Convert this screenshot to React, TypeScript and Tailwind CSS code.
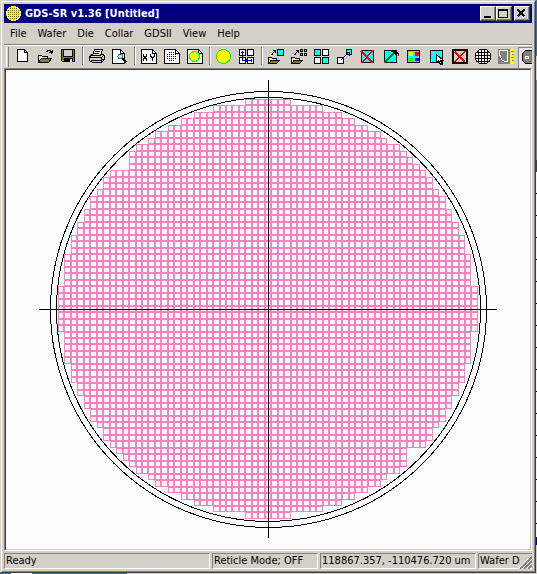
import type { ReactNode } from "react";

const COLS = 65;
const PITCH = 6.46;

// first die column for each row of the upper half, the lower half mirrors it
const ROW_START = [
  29, 24, 21, 19, 17, 15, 14, 12, 11, 10, 9, 8, 7, 7, 6, 5, 5, 4, 4, 3, 3, 2, 2, 2, 1, 1, 1, 1, 1, 0, 0, 0, 0,
];

const edge = (origin: number, i: number) => Math.round(origin + i * PITCH);

const diePath = () => {
  let d = "";
  for (let row = 0; row < COLS; row++) {
    const base = ROW_START[Math.min(row, COLS - 1 - row)];
    let first = base;
    let last = COLS - 1 - base;
    // dies kept free for the wafer marks
    if (row >= 8 && row <= 10) first = 11;
    if (row >= 54 && row <= 56) last = 53;
    const y = edge(99, row);
    const h = edge(99, row + 1) - y;
    for (let col = first; col <= last; col++) {
      const x = edge(58, col);
      const w = edge(58, col + 1) - x;
      d += `M${x} ${y}h${w}v${h}h${-w}zM${x + 1} ${y + 1}h${w - 2}v${h - 2}h${2 - w}z`;
    }
  }
  return d;
};

const WaferMap = () => (
  <svg viewBox="6 70 524 479" className="block w-full h-full" role="img" aria-label="Wafer map" shapeRendering="crispEdges" fill="none">
    <path d={diePath()} fill="#ff80c0" fillRule="evenodd" />
    <g stroke="#000">
      <circle cx="268.5" cy="309.5" r="218" />
      <circle cx="268.5" cy="309.5" r="212" />
      <path d="M268.5 80v458M39 309.5h458" />
    </g>
  </svg>
);

const Folder = () => (
  <>
    <path d="M1.5 13V6.5h3l1 1h5V9" fill="#ffff80" stroke="#000" />
    <path d="M1.5 13.5l3-4.500h10.500l-3.500 4.500z" fill="#808000" stroke="#000" />
  </>
);

const SmallFolder = () => (
  <>
    <path d="M.5 14V8.500h3l1 1h4V11" fill="#ffff80" stroke="#000" />
    <path d="M.5 14.500l3-3.500h8l-3 3.500z" fill="#808000" stroke="#000" />
    <path d="M3.500 6.500l1-2 2-2M5 1.500h2.500V4" stroke="#000" />
  </>
);

const Page = () => (
  <>
    <path d="M.5.5h11l4 4v10H.5z" fill="#fff" stroke="#000" />
    <path d="M11.500.5v4h4" stroke="#000" />
  </>
);

type Tool = { name: string; icon: ReactNode };

const groups: Tool[][] = [
  [
    {
      name: "New",
      icon: (
        <>
          <path d="M3.500.5h7l3 3v9h-10z" fill="#fff" stroke="#000" />
          <path d="M10.500.5v3h3" stroke="#000" />
        </>
      ),
    },
    {
      name: "Open",
      icon: (
        <>
          <Folder />
          <path d="M9 2.500h1v-1h3v1h1v2M12 3.500h3M15.500 1v3" stroke="#000" />
        </>
      ),
    },
    {
      name: "Save",
      icon: (
        <>
          <path d="M1.500.5h13v12h-12l-1-1z" fill="#808000" stroke="#000" />
          <path d="M4 1h8v6H4z" fill="#d4d0c8" />
          <path d="M3.500 1v6.500h9V1" stroke="#000" />
          <path d="M4 9h9v4H4z" fill="#000" />
          <path d="M10 10h2v3h-2z" fill="#d4d0c8" />
        </>
      ),
    },
  ],
  [
    {
      name: "Print",
      icon: (
        <>
          <path d="M1.500 6.500l2-1h10l2 1v4l-3 3h-9l-3-2v-3z" fill="#d4d0c8" stroke="#000" />
          <path d="M3.500 6.500l2-6h8l-2 6z" fill="#fff" stroke="#000" />
          <path d="M6 2.500h5M5 4.500h5M1 8.500h11l3-2M12.500 9v4M2 11.500h10M13 10.500h2" stroke="#000" />
          <path d="M7 10h3v1H7z" fill="#ffff00" />
        </>
      ),
    },
    {
      name: "Print preview",
      icon: (
        <>
          <path d="M.5.5h8l4 4v10H.5z" fill="#fff" stroke="#000" />
          <path d="M8.500.5v4h4" stroke="#000" />
          <circle cx="8.500" cy="7.500" r="2.500" fill="#80ffff" stroke="#606060" />
          <path d="M10.500 9.500l4 4" stroke="#000" strokeWidth="2" />
        </>
      ),
    },
  ],
  [
    {
      name: "XY coordinates",
      icon: (
        <>
          <Page />
          <path d="M2.500 5v2l3 3v2M5.500 5v2l-3 3v2M9.500 5v2l2 2 2-2V5M11.500 9v3" stroke="#000" />
        </>
      ),
    },
    {
      name: "Die list",
      icon: (
        <>
          <Page />
          <path d="M5 3.500h6M3 5.500h10M3 7.500h10M3 9.500h10M5 11.500h6" stroke="#000" strokeDasharray="1 1" />
        </>
      ),
    },
    {
      name: "Wafer page",
      icon: (
        <>
          <Page />
          <circle cx="7.500" cy="7.500" r="5" fill="#ffff00" stroke="#00ff00" />
        </>
      ),
    },
  ],
  [
    { name: "Wafer", icon: <circle cx="7.500" cy="7.500" r="7" fill="#ffff00" stroke="#00ff00" /> },
    {
      name: "Array",
      icon: (
        <>
          <path d="M.5.5h6v6h-6zM8.500.5h6v6h-6zM.5 8.500h6v6h-6zM8.500 8.500h6v6h-6z" fill="#fff" stroke="#000" />
          <path d="M3.500 2v9.500h9M2 3.500h3M7.500 10v3M12.500 10v3" stroke="#000080" />
        </>
      ),
    },
  ],
  [
    {
      name: "Open die",
      icon: (
        <>
          <SmallFolder />
          <path d="M9.500.5h6v6h-6z" fill="#00ffff" stroke="#000" />
        </>
      ),
    },
    {
      name: "Open die array",
      icon: (
        <>
          <SmallFolder />
          <path d="M9.500.5h2v2h-2zM13.500.5h2v2h-2zM9.500 4.500h2v2h-2zM13.500 4.500h2v2h-2z" fill="#00ffff" stroke="#000" />
        </>
      ),
    },
    {
      name: "Die grid",
      icon: (
        <>
          <path d="M.5.5h6v6h-6zM8.500 8.500h6v6h-6z" fill="#00ffff" stroke="#000" />
          <path d="M8.500.5h6v6h-6zM.5 8.500h6v6h-6z" fill="#fff" stroke="#000" />
        </>
      ),
    },
    {
      name: "Move die",
      icon: (
        <>
          <path d="M9.500.5h5v5h-5z" fill="#00ffff" stroke="#000" />
          <path d="M.5 8.500h6v6h-6z" fill="#fff" stroke="#000" />
          <path d="M4 11l7-7M9 3.500h3v3" stroke="#000080" />
        </>
      ),
    },
    {
      name: "Delete die",
      icon: (
        <>
          <path d="M1.500 1.500h12v12h-12z" fill="#00ffff" stroke="#000" />
          <path d="M1 2l12 12M13 1L2 14" stroke="#ff0000" strokeWidth="1.500" />
        </>
      ),
    },
    {
      name: "Build",
      icon: (
        <>
          <path d="M1.500 1.500h12v12h-12z" fill="#00ffff" stroke="#000" />
          <path d="M1 14L11 4" stroke="#008000" strokeWidth="2" />
          <path d="M6 1.500h5M8 2.500h6M10 3.500h5M11 4.500h5M12 5.500h2M15.500 4v3" stroke="#000" />
        </>
      ),
    },
    {
      name: "Colors",
      icon: (
        <>
          <path d="M1.500 1.500h12v12h-12z" fill="#00ffff" stroke="#000" />
          <path d="M3 3h4v4H3z" fill="#ffff00" />
          <path d="M9 3h4v4H9z" fill="#ff0000" />
          <path d="M3 9h4v3H3z" fill="#00ff00" />
          <path d="M9 9h4v3H9z" fill="#0000ff" />
        </>
      ),
    },
    {
      name: "Select die",
      icon: (
        <>
          <path d="M1.500 1.500h12v12h-12z" fill="#00ffff" stroke="#000" />
          <path d="M7.500 5.500v8l2-2 2 4h2l-2-4h3z" fill="#fff" stroke="#000" />
        </>
      ),
    },
    {
      name: "Clear all",
      icon: (
        <>
          <path d="M1 1h14v13H1z" fill="#d4d0c8" stroke="#000" strokeWidth="2" />
          <path d="M3 3l10 10M13 2L3 13" stroke="#ff0000" strokeWidth="1.500" />
        </>
      ),
    },
    {
      name: "Grid",
      icon: (
        <>
          <path d="M4.500.5h7l4 4v6l-4 4h-7l-4-4v-6z" fill="#fff" stroke="#000" />
          <path d="M3.500 1v13M6.500 0v15M9.500 0v15M12.500 1v13M1 3.500h14M0 6.500h16M0 9.500h16M1 12.500h14" stroke="#000" />
        </>
      ),
    },
    {
      name: "Ruler",
      icon: (
        <>
          <path d="M0 0h11v15H0z" fill="#808080" />
          <path d="M10 1.500H1.500v3l1 4 2 3 3 1h2V2" stroke="#fff" />
          <path d="M11 0h5v15h-5z" fill="#ffff00" />
          <path d="M11.500 0v15M13 2.500h3M14 5.500h2M13 8.500h3M14 11.500h2" stroke="#808080" />
        </>
      ),
    },
  ],
];

const ToolIcon = ({ children }: { children: ReactNode }) => (
  <svg viewBox="0 0 16 16" className="w-4 h-4 overflow-visible" fill="none" shapeRendering="crispEdges" aria-hidden="true">
    {children}
  </svg>
);

const Toolbar = () => (
  <div className="flex h-[24px] shrink-0 overflow-hidden border-t border-[#808080]">
    <div className="flex flex-1 min-w-0 border-t border-white pt-px">
      <div className="mx-[2px] w-[3px] h-[20px] shrink-0 border-l border-white border-r border-r-[#808080]" />
      {groups.map((tools, i) => (
        <div key={i} className="flex shrink-0">
          {i > 0 && <div className="mx-[2px] w-[2px] h-[18px] border-l border-[#808080] border-r border-r-white" />}
          {tools.map((tool) => (
            <button key={tool.name} type="button" aria-label={tool.name} className="w-[23px] h-[20px] px-[3px] pt-[2px] flex items-start">
              <ToolIcon>{tool.icon}</ToolIcon>
            </button>
          ))}
        </div>
      ))}
      <button
        type="button"
        aria-label="Reticle mode"
        aria-pressed="true"
        className="w-[23px] h-[21px] px-[2px] pt-px shrink-0 flex items-start bg-[#eae8e3] border-l border-t border-[#808080]"
      >
        <ToolIcon>
          <path d="M4.500 1.500h9v13h-9l-3-3v-7z" fill="#808080" stroke="#000" />
          <path d="M4 7h4v3H4z" fill="#fff" />
          <path d="M5 8.500h2" stroke="#808080" />
        </ToolIcon>
      </button>
    </div>
  </div>
);

const captionButton =
  "w-4 h-[15px] bg-[#d4d0c8] border border-t-white border-l-white border-r-[#404040] border-b-[#404040] shadow-[inset_-1px_-1px_0_#808080]";

const TitleBar = () => (
  <header className="flex items-center h-[19px] shrink-0 bg-[#000080] pl-[2px] pr-[2px]">
    <svg viewBox="0 0 16 16" className="w-4 h-4 shrink-0" shapeRendering="crispEdges" aria-hidden="true">
      <circle cx="7.500" cy="7.500" r="7.500" fill="#ffff00" />
      <path d="M4 2.500h8M2 4.500h12M2 6.500h12M2 8.500h12M2 10.500h12M4 12.500h8" stroke="#606000" strokeDasharray="1 1" />
    </svg>
    <h1 className="ml-[3px] flex-1 min-w-0 truncate text-white font-bold">GDS-SR v1.36 [Untitled]</h1>
    <button type="button" aria-label="Minimize" className={captionButton}>
      <svg viewBox="0 0 14 13" className="block w-[14px] h-[13px]" shapeRendering="crispEdges">
        <path d="M3 9h7v2H3z" />
      </svg>
    </button>
    <button type="button" aria-label="Maximize" className={captionButton}>
      <svg viewBox="0 0 14 13" className="block w-[14px] h-[13px]" shapeRendering="crispEdges">
        <path d="M1 2h10v9H1zM2 4v6h8V4z" fillRule="evenodd" />
      </svg>
    </button>
    <button type="button" aria-label="Close" className={`ml-[2px] ${captionButton}`}>
      <svg viewBox="0 0 14 13" className="block w-[14px] h-[13px]" shapeRendering="crispEdges">
        <path d="M2.500 2.500l7 7M9.500 2.500l-7 7" stroke="#000" strokeWidth="2" />
      </svg>
    </button>
  </header>
);

const MenuBar = () => (
  <nav className="flex items-center h-[21px] shrink-0 pl-[6px] gap-[11px]">
    {["File", "Wafer", "Die", "Collar", "GDSII", "View", "Help"].map((label) => (
      <button key={label} type="button">
        {label}
      </button>
    ))}
  </nav>
);

const statusPanel =
  "h-full px-px overflow-hidden whitespace-nowrap border border-t-[#808080] border-l-[#808080] border-r-white border-b-white";

const StatusBar = () => (
  <footer className="relative flex gap-[2px] h-[16px] mt-[2px] shrink-0 leading-[14px]">
    <div className={`flex-1 min-w-0 ${statusPanel}`}>Ready</div>
    <div className={`w-[106px] ${statusPanel}`}>Reticle Mode; OFF</div>
    <div className={`w-[156px] ${statusPanel}`}>118867.357, -110476.720 um</div>
    <div className="w-[54px] pl-px whitespace-nowrap border-t border-l border-[#808080] border-b border-b-white">Wafer D</div>
    <svg viewBox="0 0 13 13" className="absolute right-0 bottom-0 w-[13px] h-[13px]" aria-hidden="true">
      <path d="M1 13L13 1M5 13l8-8M9 13l4-4" stroke="#808080" strokeWidth="2" />
      <path d="M0 12L12 0M4 12l9-9M8 12l5-5" stroke="#fff" />
    </svg>
  </footer>
);

const App = () => {
  return (
    <div className="flex flex-col h-screen bg-[#3a6ea5] font-['DejaVu_Sans_Condensed','DejaVu_Sans',sans-serif] text-[11px] leading-[14px] text-black">
      <div className="flex flex-1 min-h-0">
        <div className="flex-1 min-w-0 flex border border-[#d4d0c8] border-r-[#404040] border-b-[#404040]">
          <div className="flex-1 min-w-0 flex flex-col p-[2px] bg-[#d4d0c8] border border-white border-r-[#808080] border-b-[#808080]">
            <TitleBar />
            <MenuBar />
            <Toolbar />
            <main className="flex-1 min-h-0 border border-[#808080] border-r-white border-b-white">
              <div className="h-full bg-[#fcfcfc] border border-[#404040] border-r-[#d4d0c8] border-b-[#d4d0c8]">
                <WaferMap />
              </div>
            </main>
            <StatusBar />
          </div>
        </div>
        {/* sliver of the window behind */}
        <div className="w-px flex flex-col">
          <div className="h-[56px] bg-[#3a6ea5]" />
          <div className="h-[24px] bg-[#d4d0c8]" />
          <div className="h-[80px] bg-[#808080]" />
          <div className="h-[12px] bg-[#404040]" />
          <div className="flex-1 bg-[repeating-linear-gradient(#f4f4f4_0px,#f4f4f4_21px,#000_21px,#000_22px)]" />
          <div className="h-[8px] bg-[#000080]" />
          <div className="h-[28px] bg-[#d4d0c8]" />
        </div>
      </div>
      <div className="flex h-px">
        <div className="w-[11px]" />
        <div className="w-[21px] bg-white" />
        <div className="w-[95px]" />
        <div className="flex-1 bg-[#d4d0c8]" />
      </div>
    </div>
  );
};

export default App;
